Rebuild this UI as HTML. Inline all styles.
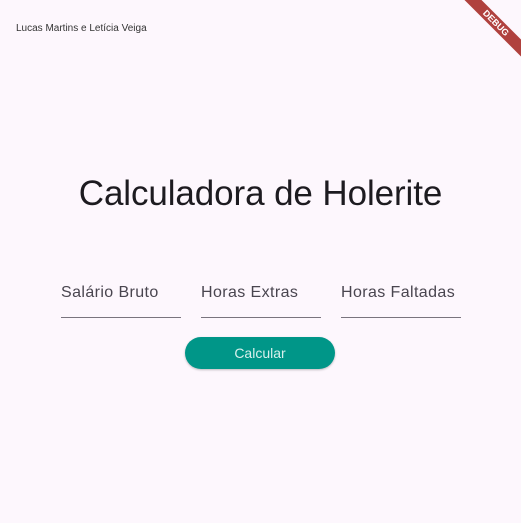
<!DOCTYPE html>
<html><head><meta charset="utf-8"><style>
html,body{margin:0;padding:0;width:521px;height:523px;background:#fdf7fd;overflow:hidden;position:relative;font-family:"Liberation Sans",sans-serif}
.top{position:absolute;left:16px;top:23px;font-size:10px;color:#333}
h1{position:absolute;left:0;width:521px;top:174px;margin:0;text-align:center;font-weight:400;font-size:35px;color:#1d1b20;letter-spacing:-0.1px}
.f{position:absolute;top:284px;width:120px;height:33px;border-bottom:1px solid #79747e;font-size:16px;color:#49454f;letter-spacing:0.4px}
.btn{position:absolute;left:185px;top:337px;width:150px;height:32px;border-radius:16px;background:#009688;color:#d8f0ec;font-size:14px;text-align:center;line-height:32px;box-shadow:0 1px 2px rgba(0,0,0,.25)}
.rib{position:absolute;right:-30px;top:17px;width:110px;height:12px;background:#b0413e;transform:rotate(45deg);color:#fff;font-size:9px;font-weight:bold;text-align:center;line-height:12px}
</style></head><body>
<div class="top">Lucas Martins e Letícia Veiga</div>
<div class="rib">DEBUG</div>
<h1>Calculadora de Holerite</h1>
<div class="f" style="left:61px">Salário Bruto</div>
<div class="f" style="left:201px">Horas Extras</div>
<div class="f" style="left:341px">Horas Faltadas</div>
<div class="btn">Calcular</div>
</body></html>
